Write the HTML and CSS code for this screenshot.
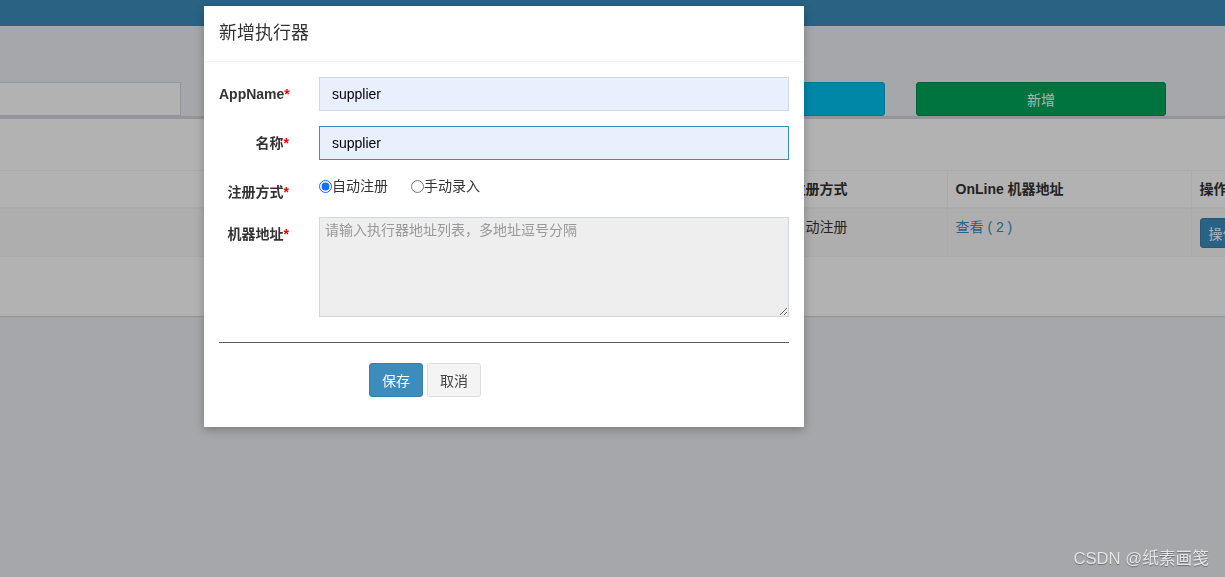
FILE: index.html
```html
<!DOCTYPE html>
<html lang="zh-CN">
<head>
<meta charset="utf-8">
<title>执行器管理</title>
<link rel="stylesheet" href="styles.css">
</head>
<body>
<div class="page">
  <header class="topbar"></header>
  <div class="toolbar">
    <div class="search"></div>
    <button class="btn btn-search">搜索</button>
    <button class="btn btn-add">新增</button>
  </div>
  <section class="box">
    <table class="grid">
      <colgroup>
        <col class="c1"><col class="c2"><col class="c3"><col class="c4">
      </colgroup>
      <thead>
        <tr><th></th><th>注册方式</th><th>OnLine 机器地址</th><th>操作</th></tr>
      </thead>
      <tbody>
        <tr><td></td><td>自动注册</td><td><a class="link">查看 ( 2 )</a></td><td><button class="btn-op">操作</button></td></tr>
      </tbody>
    </table>
  </section>
</div>

<div class="backdrop"></div>

<div class="modal">
  <div class="modal-header"><h4 class="modal-title">新增执行器</h4></div>
  <div class="modal-body">
    <div class="form-row">
      <label class="form-label">AppName<span class="req">*</span></label>
      <div class="form-field"><input class="form-control" type="text" value="supplier"></div>
    </div>
    <div class="form-row">
      <label class="form-label">名称<span class="req">*</span></label>
      <div class="form-field"><input class="form-control focus" type="text" value="supplier"></div>
    </div>
    <div class="form-row">
      <label class="form-label">注册方式<span class="req">*</span></label>
      <div class="form-field radios">
        <label class="radio"><input type="radio" name="t" checked>自动注册</label>
        <label class="radio"><input type="radio" name="t">手动录入</label>
      </div>
    </div>
    <div class="form-row">
      <label class="form-label">机器地址<span class="req">*</span></label>
      <div class="form-field"><textarea class="form-area" placeholder="请输入执行器地址列表，多地址逗号分隔" readonly></textarea></div>
    </div>
    <hr class="sep">
    <div class="actions">
      <button class="btn-save">保存</button>
      <button class="btn-cancel">取消</button>
    </div>
  </div>
</div>

<div class="watermark">CSDN @纸素画笺</div>
</body>
</html>
```

FILE: styles.css
```css
* { box-sizing: border-box; }
html, body {
  margin: 0;
  padding: 0;
  width: 1225px;
  height: 577px;
  overflow: hidden;
}
body {
  background: #ecf0f5;
  font-family: "Liberation Sans", "Noto Sans CJK SC", sans-serif;
  font-size: 14px;
  color: #333;
  line-height: 20px;
}
.page { width: 1225px; }
.topbar { height: 26px; background: #3c8dbc; }

.toolbar {
  display: flex;
  margin-top: 56px;
  height: 34px;
}
.search {
  width: 181px;
  height: 34px;
  background: #fff;
  border: 1px solid #d2d6de;
  border-left: none;
}
.btn {
  height: 34px;
  width: 250px;
  border: 1px solid transparent;
  border-radius: 3px;
  font-family: inherit;
  font-size: 14px;
  color: #fff;
  padding: 0;
}
.btn-search { margin-left: 454px; background: #00c0ef; border-color: #00acd6; }
.btn-add { margin-left: 31px; background: #00a65a; border-color: #008d4c; }

.box {
  background: #fff;
  border-top: 3px solid #d2d6de;
  height: 200px;
  padding-top: 51px;
  box-shadow: 0 1px 1px rgba(0,0,0,.1);
  overflow: hidden;
}
.grid {
  table-layout: fixed;
  width: 1300px;
  border-collapse: collapse;
  border-top: 1px solid #f4f4f4;
}
.c1 { width: 783px; }
.c2 { width: 164px; }
.c3 { width: 244px; }
.c4 { width: 109px; }
.grid th, .grid td {
  padding: 8px;
  text-align: left;
  vertical-align: top;
  white-space: nowrap;
  border-left: 1px solid #f4f4f4;
}
.grid th:first-child, .grid td:first-child { border-left: none; }
.grid th { font-weight: bold; border-bottom: 2px solid #f4f4f4; }
.grid tbody tr { background: #f9f9f9; border-bottom: 1px solid #f4f4f4; }
.link { color: #3c8dbc; }
.btn-op {
  height: 30px;
  margin-top: 1px;
  padding: 0 8px;
  background: #3c8dbc;
  border: 1px solid #367fa9;
  border-radius: 3px;
  color: #fff;
  font-family: inherit;
  font-size: 14px;
}

.backdrop {
  position: fixed;
  inset: 0;
  background: rgba(0,0,0,.3);
}

.modal {
  position: absolute;
  left: 204px;
  top: 6px;
  width: 600px;
  background: #fff;
  box-shadow: 0 3px 9px rgba(0,0,0,.25);
}
.modal-header {
  padding: 15px;
  border-bottom: 1px solid #f4f4f4;
}
.modal-title {
  margin: 0;
  font-size: 18px;
  font-weight: normal;
  line-height: 25px;
  color: #333;
}
.modal-body { padding: 15px 0; }
.form-row {
  display: flex;
  margin-bottom: 15px;
}
.form-label {
  width: 100px;
  padding: 7px 15px 0;
  text-align: right;
  font-weight: bold;
  white-space: nowrap;
}
.req { color: #e00; }
.form-field { width: 500px; padding: 0 15px; }
.form-control {
  display: block;
  width: 100%;
  height: 34px;
  padding: 6px 12px;
  border: 1px solid #d2d6de;
  background: #e8f0fe;
  color: #000;
  font-family: inherit;
  font-size: 14px;
  outline: none;
}
.form-control.focus { border-color: #3c8dbc; }
.radios { display: flex; gap: 23px; margin-top: 1px; }
.radio { display: flex; align-items: center; white-space: nowrap; height: 20px; }
.radio input { margin: 0; width: 13px; height: 13px; }
.form-area {
  display: block;
  width: 100%;
  height: 100px;
  padding: 2px 5px;
  border: 1px solid #d2d6de;
  background: #eee;
  font-family: inherit;
  font-size: 14px;
  line-height: 20px;
  resize: vertical;
  outline: none;
}
.form-area::placeholder { color: #999; }
.sep {
  margin: 25px 15px 20px;
  border: 0;
  border-top: 1px solid #5a5a5a;
}
.actions {
  display: flex;
  gap: 4px;
  padding-left: 165px;
  margin-bottom: 15px;
}
.btn-save, .btn-cancel {
  height: 34px;
  width: 54px;
  border-radius: 3px;
  font-family: inherit;
  font-size: 14px;
  padding: 0;
}
.btn-save { background: #3c8dbc; border: 1px solid #367fa9; color: #fff; }
.btn-cancel { background: #f4f4f4; border: 1px solid #ddd; color: #444; }

.watermark {
  position: absolute;
  right: 16px;
  bottom: 8px;
  font-size: 16.7px;
  color: #e4e4e4;
  text-shadow: 0 1px 1px rgba(0,0,0,.35);
  white-space: nowrap;
}
```
